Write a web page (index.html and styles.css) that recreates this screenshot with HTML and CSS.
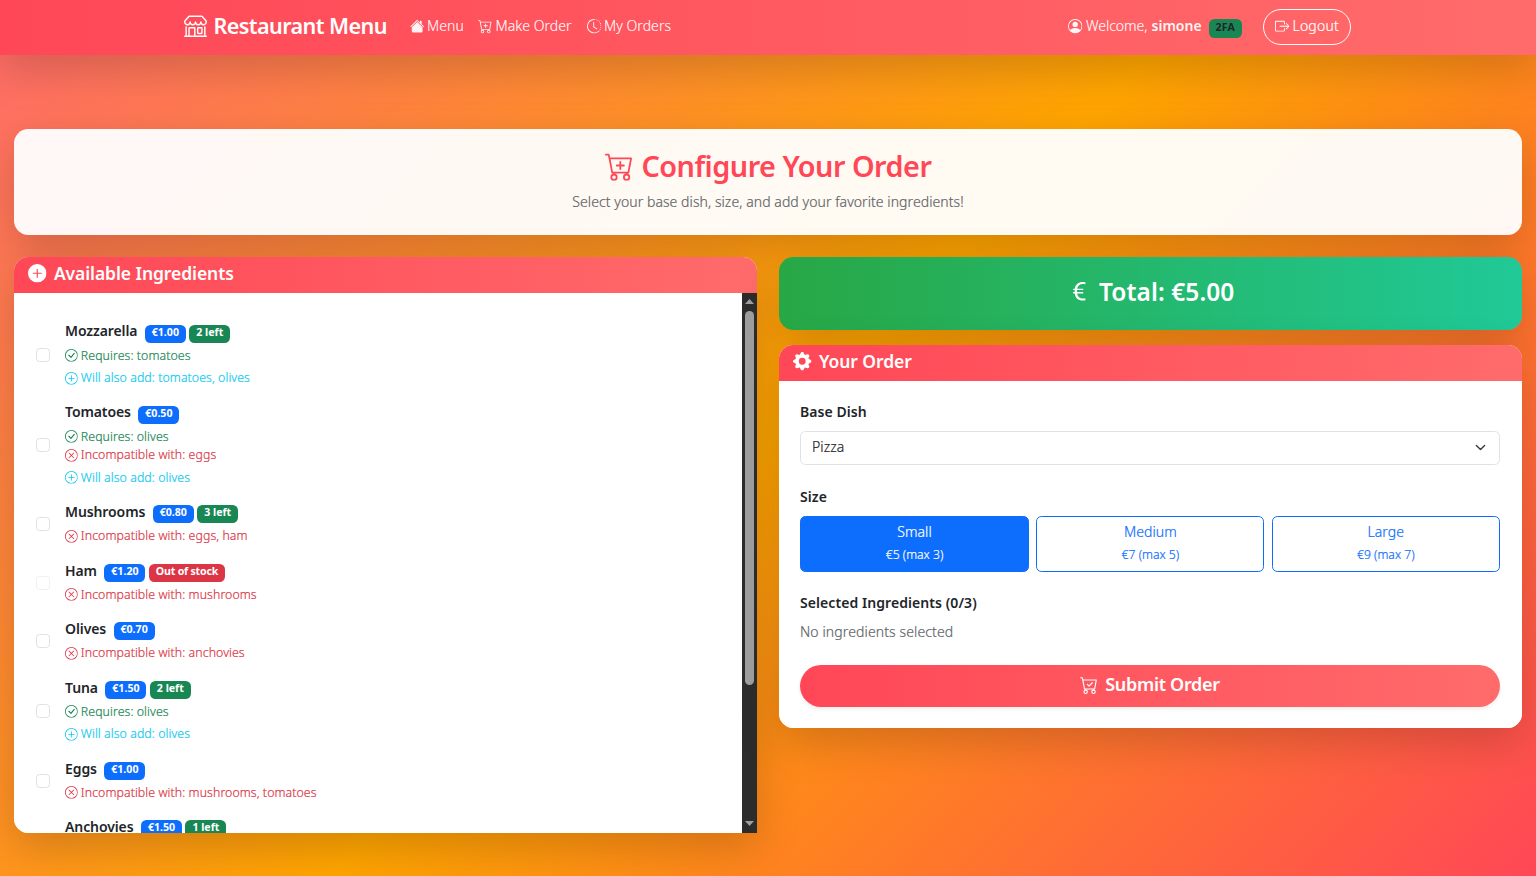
FILE: index.html
```html
<!DOCTYPE html>
<html lang="en">
<head>
<meta charset="utf-8">
<title>Restaurant Menu</title>
<link rel="stylesheet" href="styles.css">
</head>
<body>
<svg width="0" height="0" class="defs">
<symbol id="shop" viewBox="0 0 16 16"><path d="M2.97 1.35A1 1 0 0 1 3.73 1h8.54a1 1 0 0 1 .76.35l2.609 3.044A1.5 1.5 0 0 1 16 5.37v.255a2.375 2.375 0 0 1-4.25 1.458A2.37 2.37 0 0 1 9.875 8 2.37 2.37 0 0 1 8 7.083 2.37 2.37 0 0 1 6.125 8a2.37 2.37 0 0 1-1.875-.917A2.375 2.375 0 0 1 0 5.625V5.37a1.5 1.5 0 0 1 .361-.976zm1.78 4.275a1.375 1.375 0 0 0 2.75 0 .5.5 0 0 1 1 0 1.375 1.375 0 0 0 2.75 0 .5.5 0 0 1 1 0 1.375 1.375 0 1 0 2.75 0V5.37a.5.5 0 0 0-.12-.325L12.27 2H3.73L1.12 5.045A.5.5 0 0 0 1 5.37v.255a1.375 1.375 0 0 0 2.75 0 .5.5 0 0 1 1 0M1.5 8.5A.5.5 0 0 1 2 9v6h1v-5a1 1 0 0 1 1-1h3a1 1 0 0 1 1 1v5h6V9a.5.5 0 0 1 1 0v6h.5a.5.5 0 0 1 0 1H.5a.5.5 0 0 1 0-1H1V9a.5.5 0 0 1 .5-.5M4 15h3v-5H4zm5-5a1 1 0 0 1 1-1h2a1 1 0 0 1 1 1v3a1 1 0 0 1-1 1h-2a1 1 0 0 1-1-1zm3 0h-2v3h2z"/></symbol>
<symbol id="house" viewBox="0 0 16 16"><path d="M8.707 1.5a1 1 0 0 0-1.414 0L.646 8.146a.5.5 0 0 0 .708.708L8 2.207l6.646 6.647a.5.5 0 0 0 .708-.708L13 5.793V2.5a.5.5 0 0 0-.5-.5h-1a.5.5 0 0 0-.5.5v1.293z"/><path d="m8 3.293 6 6V13.5a1.5 1.5 0 0 1-1.5 1.5h-9A1.5 1.5 0 0 1 2 13.5V9.293z"/></symbol>
<symbol id="cart" viewBox="0 0 16 16"><path d="M.5 1a.5.5 0 0 0 0 1h1.11l.401 1.607 1.498 7.985A.5.5 0 0 0 4 12h1a2 2 0 1 0 0 4 2 2 0 0 0 0-4h7a2 2 0 1 0 0 4 2 2 0 0 0 0-4h1a.5.5 0 0 0 .491-.408l1.5-8A.5.5 0 0 0 14.5 3H2.89l-.405-1.621A.5.5 0 0 0 2 1zm3.915 10L3.102 4h10.796l-1.313 7zM6 14a1 1 0 1 1-2 0 1 1 0 0 1 2 0m7 0a1 1 0 1 1-2 0 1 1 0 0 1 2 0"/></symbol>
<symbol id="cart-plus" viewBox="0 0 16 16"><use href="#cart"/><path d="M9 5.5a.5.5 0 0 0-1 0V7H6.5a.5.5 0 0 0 0 1H8v1.500a.5.5 0 0 0 1 0V8h1.500a.5.5 0 0 0 0-1H9z"/></symbol>
<symbol id="cart-check" viewBox="0 0 16 16"><use href="#cart"/><path d="M11.354 6.354a.5.5 0 0 0-.708-.708L8 8.293 6.854 7.146a.5.5 0 1 0-.708.708l1.500 1.500a.5.5 0 0 0 .708 0z"/></symbol>
<symbol id="clock" viewBox="0 0 16 16"><path d="M8.515 1.019A7 7 0 0 0 8 1V0a8 8 0 0 1 .589.022zm2.004.45a7 7 0 0 0-.985-.299l.219-.976q.576.129 1.126.342zm1.370.710a7 7 0 0 0-.439-.27l.493-.87a8 8 0 0 1 .979.654l-.615.789a7 7 0 0 0-.418-.302zm1.834 1.790a7 7 0 0 0-.653-.796l.724-.69q.406.429.747.910zm.744 1.352a7 7 0 0 0-.214-.468l.893-.45a8 8 0 0 1 .450 1.088l-.950.313a7 7 0 0 0-.179-.483m.530 2.507a7 7 0 0 0-.100-1.025l.985-.170q.100.580.116 1.170zm-.131 1.538q.050-.254.081-.510l.993.123a8 8 0 0 1-.230 1.155l-.964-.267q.069-.247.120-.501m-.952 2.379q.276-.436.486-.908l.914.405q-.240.540-.555 1.038zm-.964 1.205q.183-.183.350-.378l.758.653a8 8 0 0 1-.401.432z"/><path d="M8 1a7 7 0 1 0 4.950 11.950l.707.707A8.001 8.001 0 1 1 8 0z"/><path d="M7.500 3a.5.5 0 0 1 .5.5v5.210l3.248 1.856a.5.5 0 0 1-.496.868l-3.500-2A.5.5 0 0 1 7 9V3.500a.5.5 0 0 1 .5-.5"/></symbol>
<symbol id="person" viewBox="0 0 16 16"><path d="M11 6a3 3 0 1 1-6 0 3 3 0 0 1 6 0"/><path fill-rule="evenodd" d="M0 8a8 8 0 1 1 16 0A8 8 0 0 1 0 8m8-7a7 7 0 0 0-5.468 11.370C3.242 11.226 4.805 10 8 10s4.757 1.225 5.468 2.370A7 7 0 0 0 8 1"/></symbol>
<symbol id="exit" viewBox="0 0 16 16"><path d="M10 12.500a.5.5 0 0 1-.5.5h-8a.5.5 0 0 1-.5-.5v-9a.5.5 0 0 1 .5-.5h8a.5.5 0 0 1 .5.5v2a.5.5 0 0 0 1 0v-2A1.500 1.500 0 0 0 9.500 2h-8A1.500 1.500 0 0 0 0 3.500v9A1.500 1.500 0 0 0 1.500 14h8a1.500 1.500 0 0 0 1.500-1.500v-2a.5.5 0 0 0-1 0z"/><path d="M15.854 8.354a.5.5 0 0 0 0-.708l-3-3a.5.5 0 0 0-.708.708L14.293 7.500H5.500a.5.5 0 0 0 0 1h8.793l-2.147 2.146a.5.5 0 0 0 .708.708z"/></symbol>
<symbol id="plus-fill" viewBox="0 0 16 16"><path d="M16 8A8 8 0 1 1 0 8a8 8 0 0 1 16 0M8.500 4.500a.5.5 0 0 0-1 0v3h-3a.5.5 0 0 0 0 1h3v3a.5.5 0 0 0 1 0v-3h3a.5.5 0 0 0 0-1h-3z"/></symbol>
<symbol id="ring" viewBox="0 0 16 16"><path d="M8 15A7 7 0 1 1 8 1a7 7 0 0 1 0 14m0 1A8 8 0 1 0 8 0a8 8 0 0 0 0 16"/></symbol>
<symbol id="plus" viewBox="0 0 16 16"><use href="#ring"/><path d="M8 4a.5.5 0 0 1 .5.5v3h3a.5.5 0 0 1 0 1h-3v3a.5.5 0 0 1-1 0v-3h-3a.5.5 0 0 1 0-1h3v-3A.5.5 0 0 1 8 4"/></symbol>
<symbol id="check" viewBox="0 0 16 16"><use href="#ring"/><path d="m10.970 4.970-.020.022-3.473 4.425-2.093-2.094a.75.75 0 0 0-1.060 1.060L6.970 11.030a.75.75 0 0 0 1.079-.020l3.992-4.990a.75.75 0 0 0-1.071-1.050"/></symbol>
<symbol id="x" viewBox="0 0 16 16"><use href="#ring"/><path d="M4.646 4.646a.5.5 0 0 1 .708 0L8 7.293l2.646-2.647a.5.5 0 0 1 .708.708L8.707 8l2.647 2.646a.5.5 0 0 1-.708.708L8 8.707l-2.646 2.647a.5.5 0 0 1-.708-.708L7.293 8 4.646 5.354a.5.5 0 0 1 0-.708"/></symbol>
<symbol id="euro" viewBox="0 0 16 16"><path d="M4 9.420h1.063C5.400 12.323 7.317 14 10.340 14c.622 0 1.167-.068 1.659-.185v-1.300c-.484.119-1.045.170-1.659.170-2.100 0-3.455-1.198-3.775-3.264h4.017v-.928H6.497v-.936q-.002-.165.008-.329h4.078v-.927H6.618c.388-1.898 1.719-2.985 3.723-2.985.614 0 1.175.050 1.659.177V2.194A6.600 6.600 0 0 0 10.341 2c-2.928 0-4.820 1.569-5.244 4.300H4v.928h1.010v1.265H4v.928z"/></symbol>
<symbol id="gear" viewBox="0 0 16 16"><path d="M9.405 1.050c-.413-1.400-2.397-1.400-2.810 0l-.100.340a1.464 1.464 0 0 1-2.105.872l-.310-.170c-1.283-.698-2.686.705-1.987 1.987l.169.311c.446.820.023 1.841-.872 2.105l-.340.100c-1.400.413-1.400 2.397 0 2.810l.340.100a1.464 1.464 0 0 1 .872 2.105l-.170.310c-.698 1.283.705 2.686 1.987 1.987l.311-.169a1.464 1.464 0 0 1 2.105.872l.100.340c.413 1.400 2.397 1.400 2.810 0l.100-.340a1.464 1.464 0 0 1 2.105-.872l.310.170c1.283.698 2.686-.705 1.987-1.987l-.169-.311a1.464 1.464 0 0 1 .872-2.105l.340-.100c1.400-.413 1.400-2.397 0-2.810l-.340-.100a1.464 1.464 0 0 1-.872-2.105l.170-.310c.698-1.283-.705-2.686-1.987-1.987l-.311.169a1.464 1.464 0 0 1-2.105-.872zM8 10.930a2.929 2.929 0 1 1 0-5.860 2.929 2.929 0 0 1 0 5.858z"/></symbol>
</svg>

<nav class="navbar">
  <div class="nav-inner">
    <div class="brand"><svg class="icon"><use href="#shop"/></svg><span>Restaurant Menu</span></div>
    <div class="link link-menu"><svg class="icon"><use href="#house"/></svg><span>Menu</span></div>
    <div class="link link-make"><svg class="icon"><use href="#cart-plus"/></svg><span>Make Order</span></div>
    <div class="link link-orders"><svg class="icon"><use href="#clock"/></svg><span>My Orders</span></div>
    <div class="user"><svg class="icon"><use href="#person"/></svg><span class="welcome">Welcome,</span><b>simone</b><span class="badge twofa">2FA</span></div>
    <div class="logout"><svg class="icon"><use href="#exit"/></svg><span>Logout</span></div>
  </div>
</nav>

<main>
  <section class="hero card">
    <h1><svg class="icon"><use href="#cart-plus"/></svg><span>Configure Your Order</span></h1>
    <p>Select your base dish, size, and add your favorite ingredients!</p>
  </section>
  <div class="columns">
    <section class="card ingredients">
      <h2 class="card-head"><svg class="icon"><use href="#plus-fill"/></svg><span>Available Ingredients</span></h2>
      <div class="scroll-area">
        <div class="list">
          <div class="item"><i class="box"></i><div><div class="name"><b>Mozzarella</b><span class="badge price">€1.00</span><span class="badge left">2 left</span></div><div class="note req"><svg class="icon"><use href="#check"/></svg><span>Requires: tomatoes</span></div><div class="note add"><svg class="icon"><use href="#plus"/></svg><span>Will also add: tomatoes, olives</span></div></div></div>
          <div class="item"><i class="box"></i><div><div class="name"><b>Tomatoes</b><span class="badge price">€0.50</span></div><div class="note req"><svg class="icon"><use href="#check"/></svg><span>Requires: olives</span></div><div class="note inc"><svg class="icon"><use href="#x"/></svg><span>Incompatible with: eggs</span></div><div class="note add"><svg class="icon"><use href="#plus"/></svg><span>Will also add: olives</span></div></div></div>
          <div class="item"><i class="box"></i><div><div class="name"><b>Mushrooms</b><span class="badge price">€0.80</span><span class="badge left">3 left</span></div><div class="note inc"><svg class="icon"><use href="#x"/></svg><span>Incompatible with: eggs, ham</span></div></div></div>
          <div class="item"><i class="box disabled"></i><div><div class="name"><b>Ham</b><span class="badge price">€1.20</span><span class="badge out">Out of stock</span></div><div class="note inc"><svg class="icon"><use href="#x"/></svg><span>Incompatible with: mushrooms</span></div></div></div>
          <div class="item"><i class="box"></i><div><div class="name"><b>Olives</b><span class="badge price">€0.70</span></div><div class="note inc"><svg class="icon"><use href="#x"/></svg><span>Incompatible with: anchovies</span></div></div></div>
          <div class="item"><i class="box"></i><div><div class="name"><b>Tuna</b><span class="badge price">€1.50</span><span class="badge left">2 left</span></div><div class="note req"><svg class="icon"><use href="#check"/></svg><span>Requires: olives</span></div><div class="note add"><svg class="icon"><use href="#plus"/></svg><span>Will also add: olives</span></div></div></div>
          <div class="item"><i class="box"></i><div><div class="name"><b>Eggs</b><span class="badge price">€1.00</span></div><div class="note inc"><svg class="icon"><use href="#x"/></svg><span>Incompatible with: mushrooms, tomatoes</span></div></div></div>
          <div class="item last"><i class="box"></i><div><div class="name"><b>Anchovies</b><span class="badge price">€1.50</span><span class="badge left">1 left</span></div></div></div>
        </div>
        <div class="scrollbar"><i class="arrow up"></i><i class="thumb"></i><i class="arrow down"></i></div>
      </div>
    </section>
    <div class="side">
      <section class="total"><svg class="icon"><use href="#euro"/></svg><span>Total: €5.00</span></section>
      <section class="card order">
        <h2 class="card-head"><svg class="icon"><use href="#gear"/></svg><span>Your Order</span></h2>
        <div class="order-body">
          <div class="label">Base Dish</div>
          <div class="select"><span>Pizza</span><svg class="chevron" viewBox="0 0 16 16"><path d="m2 5 6 6 6-6"/></svg></div>
          <div class="label size-label">Size</div>
          <div class="sizes">
            <div class="size active"><span>Small</span><small>€5 (max 3)</small></div>
            <div class="size"><span>Medium</span><small>€7 (max 5)</small></div>
            <div class="size"><span>Large</span><small>€9 (max 7)</small></div>
          </div>
          <div class="label selected">Selected Ingredients (0/3)</div>
          <div class="muted">No ingredients selected</div>
          <div class="submit"><svg class="icon"><use href="#cart-check"/></svg><span>Submit Order</span></div>
        </div>
      </section>
    </div>
  </div>
</main>
</body>
</html>
```
FILE: styles.css
```css
* { box-sizing: border-box; }
body { margin: 0; height: 876px; overflow: hidden; font-family: "Noto Sans", "Open Sans", sans-serif; font-size: 14px; font-weight: 300; line-height: 21.6px; letter-spacing: .07px; -webkit-text-stroke: .2px currentColor; color: #212529; white-space: nowrap; background: linear-gradient(135deg, #ff6b6b 0%, #ffa500 50%, #ff4757 100%); }
h1, h2, p { margin: 0; }
.defs { position: absolute; }
.icon { width: 1em; height: 1em; fill: currentColor; flex: none; overflow: visible; }
h1, h2, b, .brand, .badge, .label, .total, .submit { -webkit-text-stroke: 0; }
b { font-weight: 600; }

.navbar { height: 55px; background: linear-gradient(90deg, #ff4757, #ff6b6b); box-shadow: 0 14.4px 43.2px rgba(0,0,0,.175); color: #fff; }
.nav-inner { width: 1167px; height: 53px; margin-left: 184px; display: flex; align-items: center; }
.nav-inner span, .nav-inner b { margin-top: -1px; }
.brand { display: flex; align-items: center; gap: 6.5px; width: 225.5px; font-size: 21.6px; font-weight: 600; letter-spacing: -.6px; }
.brand .icon { font-size: 23px; margin-top: -2px; }
.link { display: flex; align-items: center; gap: 3px; color: rgba(255,255,255,.92); letter-spacing: .07px; }
.link .icon, .user .icon, .logout .icon { font-size: 14.4px; margin-top: -1px; }
.link-menu { width: 68.5px; }
.link-make { width: 108.5px; }
.user { display: flex; align-items: center; margin-left: auto; color: rgba(255,255,255,.95); letter-spacing: 0; }
.nav-inner .welcome { margin: -1px 4px 0 3px; }
.badge { height: 18px; padding: 0 6.900px; border-radius: 5.400px; color: #fff; font-size: 10.600px; line-height: 15.5px; font-weight: 700; letter-spacing: 0; }
.nav-inner .twofa { margin: 3px 21px 0 7px; height: 19px; line-height: 17px; background: #198754; color: #212529; letter-spacing: .2px; }
.logout { width: 88px; height: 36px; display: flex; align-items: center; justify-content: center; gap: 3px; border: 1px solid #fff; border-radius: 18px; letter-spacing: .2px; }

main { padding: 74px 14px 0; }
.card { border-radius: 14.400px; background: rgba(255,255,255,.95); box-shadow: 0 14.4px 43.2px rgba(0,0,0,.175); overflow: hidden; }
.hero { height: 106px; padding-top: 19px; text-align: center; }
h1 { display: flex; justify-content: center; align-items: center; gap: 8px; height: 36px; font-size: 28.8px; font-weight: 600; letter-spacing: -.5px; color: #ff4757; }
.hero p { margin-top: 7px; color: #5f6469; }
.columns { display: grid; grid-template-columns: 743px 743px; gap: 22px; margin-top: 22px; align-items: start; }
.ingredients { height: 576px; border-bottom-right-radius: 0; }
.card-head { height: 36px; padding: 0 14.400px 3px; display: flex; align-items: center; gap: 7px; background: linear-gradient(90deg, #ff4757, #ff6b6b); color: #fff; font-size: 17.500px; font-weight: 600; letter-spacing: -.08px; }
.card-head .icon { font-size: 18.5px; margin-top: -1px; }
.scroll-area { height: 540px; display: flex; background: #fff; }
.list { flex: 1; padding: 28.4px 0 0 22px; }
.item { display: flex; align-items: center; gap: 15px; margin-bottom: 14.400px; }
.item.last { align-items: flex-start; }
.item.last .box { margin-top: 18px; }
.box { width: 14px; height: 14px; border: 1px solid #dee2e6; border-radius: 3.600px; background: #fff; }
.box.disabled { opacity: .5; }
.name { display: flex; align-items: center; height: 21.600px; margin-bottom: 3.600px; letter-spacing: -.1px; }
.name .badge { margin: 3px 3.500px 0 0; }
.name b { margin: -2px 7.500px 0 0; }
.price { background: #0d6efd; }
.left { background: #198754; }
.out { background: #dc3545; letter-spacing: -.2px; }
.note { display: flex; align-items: center; gap: 3px; height: 18.900px; font-size: 12.300px; line-height: 18.900px; letter-spacing: .09px; }
.note .icon { font-size: 12.800px; margin-top: -1px; }
.req { color: #198754; }
.inc { color: #dc3545; }
.add { margin-top: 3.600px; color: #0dcaf0; }
.scrollbar { width: 15px; padding: 6px 3px; display: flex; flex-direction: column; background: #2c2c2c; }
.arrow { width: 9px; height: 5px; background: #9f9f9f; }
.up { clip-path: polygon(50% 0, 100% 100%, 0 100%); }
.down { clip-path: polygon(0 0, 100% 0, 50% 100%); margin: auto 0 1px; }
.thumb { height: 374px; margin-top: 7px; border-radius: 5px; background: #9f9f9f; }

.total { height: 73px; padding-bottom: 4px; display: flex; justify-content: center; align-items: center; gap: 8px; border-radius: 14.400px; background: linear-gradient(90deg, #28a745, #20c997); box-shadow: 0 14.4px 43.2px rgba(0,0,0,.175); color: #fff; font-size: 24.500px; font-weight: 600; }
.order { height: 383px; margin-top: 15px; }
.order-body { height: 347px; padding: 20px 22px 0 21px; background: #fff; }
.label { font-weight: 600; }
.select { height: 34px; margin-top: 8.400px; padding: 0 12px 2px 11px; display: flex; align-items: center; justify-content: space-between; border: 1px solid #dee2e6; border-radius: 5.400px; }
.chevron { width: 11px; height: 11px; margin: 2px 1px 0 0; fill: none; stroke: #343a40; stroke-width: 2; stroke-linecap: round; stroke-linejoin: round; }
.size-label { margin-top: 21px; }
.sizes { display: grid; grid-template-columns: 229px 228px 228px; gap: 7.4px; margin-top: 8.400px; }
.size { height: 56px; padding-top: 4px; display: flex; flex-direction: column; align-items: center; border: 1px solid #0d6efd; border-radius: 5.400px; color: #0d6efd; }
.size small { margin-top: 1px; font-size: 12.200px; letter-spacing: 0; }
.size.active { background: #0d6efd; color: #fff; }
.selected { margin-top: 20px; }
.muted { margin-top: 7px; color: #5f6469; letter-spacing: .12px; }
.submit { height: 42px; margin-top: 23px; padding-bottom: 2px; display: flex; align-items: center; justify-content: center; gap: 7px; border-radius: 21px; background: linear-gradient(90deg, #ff4757, #ff6b6b); box-shadow: 0 2px 4px rgba(0,0,0,.075); color: #fff; font-size: 18px; font-weight: 600; letter-spacing: -.3px; }
```
